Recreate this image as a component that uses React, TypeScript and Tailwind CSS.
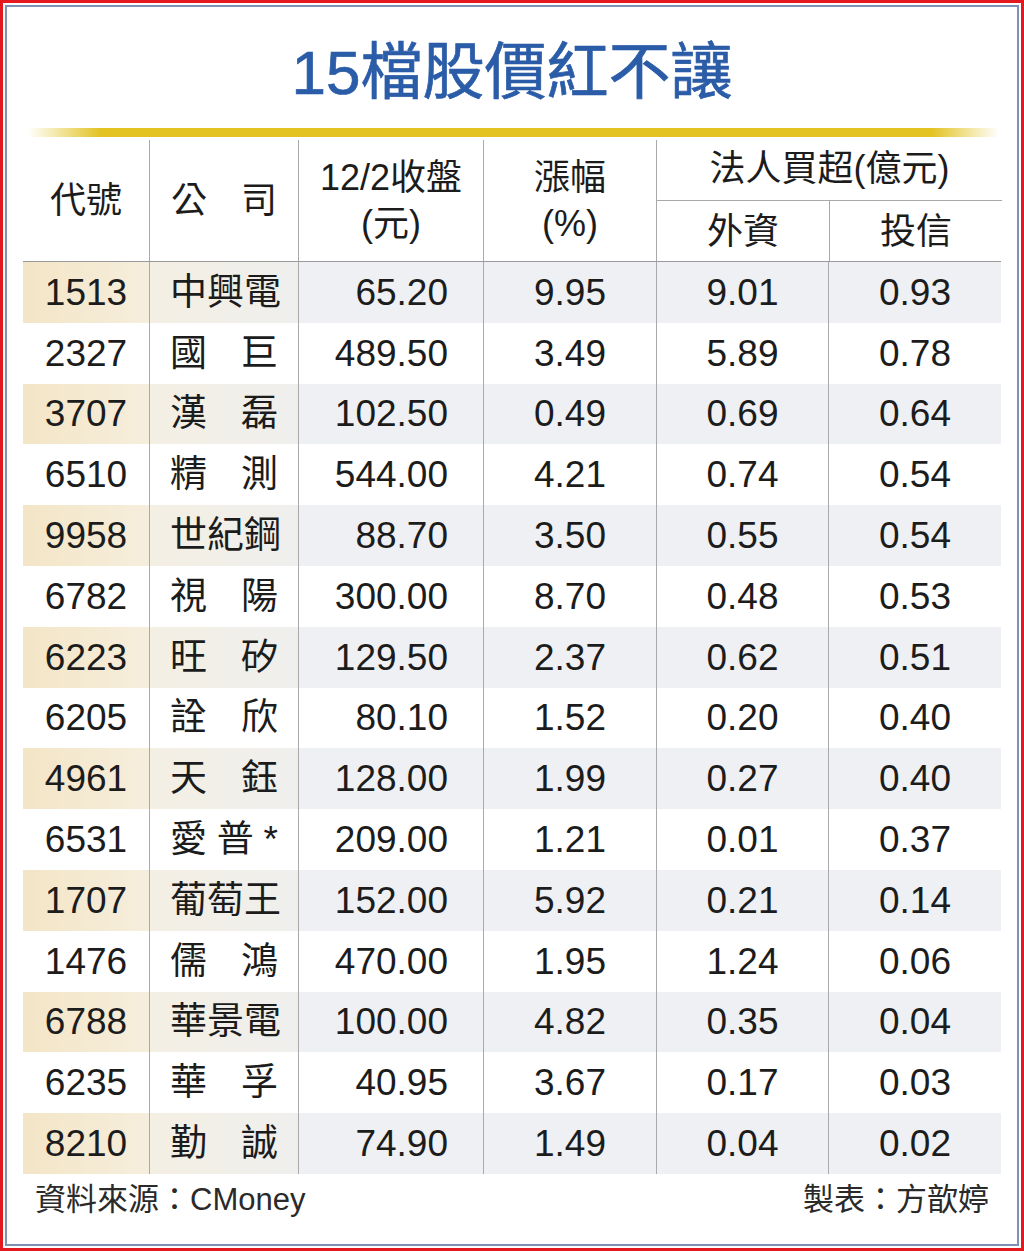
const rows: [string, string[], string, string, string, string][] = [
  ["1513", ["中", "興", "電"], "65.20", "9.95", "9.01", "0.93"],
  ["2327", ["國", "巨"], "489.50", "3.49", "5.89", "0.78"],
  ["3707", ["漢", "磊"], "102.50", "0.49", "0.69", "0.64"],
  ["6510", ["精", "測"], "544.00", "4.21", "0.74", "0.54"],
  ["9958", ["世", "紀", "鋼"], "88.70", "3.50", "0.55", "0.54"],
  ["6782", ["視", "陽"], "300.00", "8.70", "0.48", "0.53"],
  ["6223", ["旺", "矽"], "129.50", "2.37", "0.62", "0.51"],
  ["6205", ["詮", "欣"], "80.10", "1.52", "0.20", "0.40"],
  ["4961", ["天", "鈺"], "128.00", "1.99", "0.27", "0.40"],
  ["6531", ["愛", "普", "*"], "209.00", "1.21", "0.01", "0.37"],
  ["1707", ["葡", "萄", "王"], "152.00", "5.92", "0.21", "0.14"],
  ["1476", ["儒", "鴻"], "470.00", "1.95", "1.24", "0.06"],
  ["6788", ["華", "景", "電"], "100.00", "4.82", "0.35", "0.04"],
  ["6235", ["華", "孚"], "40.95", "3.67", "0.17", "0.03"],
  ["8210", ["勤", "誠"], "74.90", "1.49", "0.04", "0.02"],
];

const font = "font-['Liberation_Sans','Noto_Sans_CJK_TC',sans-serif]";
const line = "border-l border-[#a9a9a9]";

export default function App() {
  return (
    <div className={`w-[1024px] h-[1251px] border-[3px] border-[#e3191f] p-[2px] bg-white ${font}`}>
      <div className="h-full border-2 border-[#7c91b3] flex flex-col">
        <div className="h-[121px] pt-[10px] flex items-center justify-center">
          <h1 className="text-[62px] leading-none font-normal text-[#2b5ca8] [-webkit-text-stroke:0.7px_#2b5ca8]">
            15檔股價紅不讓
          </h1>
        </div>

        <div className="h-[9px] ml-[21px] mr-[18px] bg-[linear-gradient(90deg,rgba(226,195,34,0)_0%,#e2c322_7.5%,#e2c322_93%,rgba(226,195,34,0)_100%)]" />

        <div className="mt-[3px] ml-[16px] w-[978px] text-[#1c1c1c]">
          <div className="grid grid-cols-[126px_149px_185px_173px_172px_173px] h-[122px] border-b border-[#9a9a9a] text-[36px] leading-none">
            <div className="flex items-center justify-center">代號</div>
            <div className={`${line} flex items-center justify-between px-[21px]`}>
              <span>公</span>
              <span>司</span>
            </div>
            <div className={`${line} flex flex-col items-center justify-center gap-[10px]`}>
              <span>12/2收盤</span>
              <span>(元)</span>
            </div>
            <div className={`${line} flex flex-col items-center justify-center gap-[10px]`}>
              <span>漲幅</span>
              <span>(%)</span>
            </div>
            <div className={`${line} col-span-2 grid grid-cols-[172px_173px] grid-rows-[61px_60px]`}>
              <div className="col-span-2 flex items-center justify-center border-b border-[#a9a9a9] pb-[2px]">
                法人買超(億元)
              </div>
              <div className="flex items-center justify-center pt-[2px]">外資</div>
              <div className={`${line} flex items-center justify-center pt-[2px]`}>投信</div>
            </div>
          </div>

          {rows.map(([code, name, price, pct, foreign, trust], i) => {
            const shaded = i % 2 === 0;
            const gray = shaded ? "bg-[#eef0f3]" : "";
            return (
              <div
                key={code}
                className="grid grid-cols-[126px_149px_185px_173px_172px_173px] h-[60.8px] text-[37px] leading-none"
              >
                <div
                  className={`flex items-center justify-center ${
                    shaded ? "bg-[linear-gradient(90deg,#f3e5c6,#f6eedd)]" : ""
                  }`}
                >
                  {code}
                </div>
                <div
                  className={`${line} flex items-center justify-between px-[20px] ${
                    shaded ? "bg-[linear-gradient(90deg,#f4efe3,#efefee)]" : ""
                  }`}
                >
                  {name.map((c, j) => (
                    <span key={j}>{c}</span>
                  ))}
                </div>
                <div className={`${line} ${gray} flex items-center justify-end pr-[35px]`}>{price}</div>
                <div className={`${line} ${gray} flex items-center justify-center`}>{pct}</div>
                <div className={`${line} ${gray} flex items-center justify-center`}>{foreign}</div>
                <div className={`${line} ${gray} flex items-center justify-center`}>{trust}</div>
              </div>
            );
          })}

          <div className="h-[52px] flex items-center justify-between px-[12px] text-[31px] leading-none text-[#2a2a2a]">
            <span>資料來源：CMoney</span>
            <span>製表：方歆婷</span>
          </div>
        </div>
      </div>
    </div>
  );
}
